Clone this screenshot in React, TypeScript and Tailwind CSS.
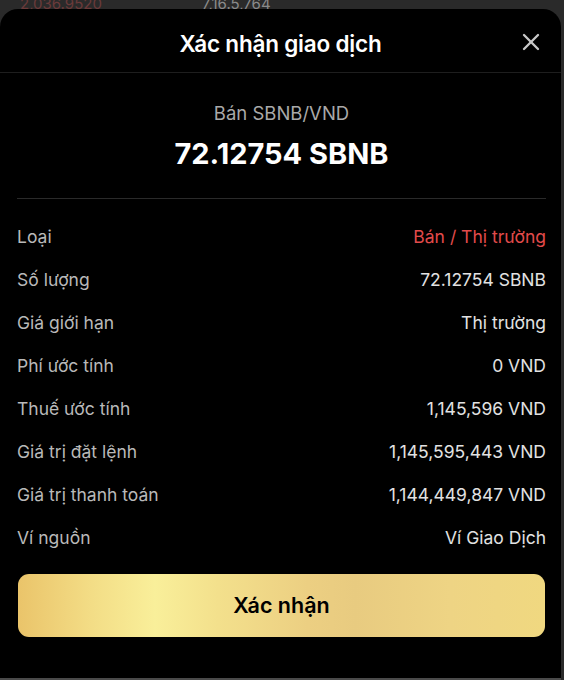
import { X } from "lucide-react"

const rows: { label: string; value: string; red?: boolean }[] = [
    { label: "Loại", value: "Bán / Thị trường", red: true },
    { label: "Số lượng", value: "72.12754 SBNB" },
    { label: "Giá giới hạn", value: "Thị trường" },
    { label: "Phí ước tính", value: "0 VND" },
    { label: "Thuế ước tính", value: "1,145,596 VND" },
    { label: "Giá trị đặt lệnh", value: "1,145,595,443 VND" },
    { label: "Giá trị thanh toán", value: "1,144,449,847 VND" },
    { label: "Ví nguồn", value: "Ví Giao Dịch" },
]

export default function App() {
    return (
        <div className="w-[564px] h-[680px] bg-[#2a2a2a] flex flex-col overflow-hidden font-['Inter','Noto_Sans',sans-serif]">
            {/* page behind the sheet, mostly hidden */}
            <div className="h-[9px] flex items-end overflow-hidden text-[15px] leading-none">
                <span className="ml-[20px] text-[#6b3a3a] -mb-[2px]">2,036.9520</span>
                <span className="ml-[100px] text-[#8a8a8a] -mb-[2px]">7,16.5,764</span>
                <span className="ml-[110px] text-[#777] -mb-[14px]">72.12754</span>
            </div>

            <div className="flex-1 mr-[3px] bg-black rounded-t-[18px] flex flex-col border-b-2 border-[#4a4a4a]">
                <div className="relative h-[64px] pt-[6px] flex items-center justify-center border-b border-[#1e1e1e]">
                    <h1 className="text-white text-[22.5px] font-semibold tracking-[-0.2px]">Xác nhận giao dịch</h1>
                    <X className="absolute right-[16px] top-[19px] text-[#c8c8c8]" size={28} strokeWidth={2} />
                </div>

                <div className="flex flex-col items-center pt-[28px] pb-[26px] ml-[17px] mr-[15px] border-b border-[#2a2a2a]">
                    <div className="text-[#a9a9a9] text-[18.5px] leading-[24px]">Bán SBNB/VND</div>
                    <div className="text-white text-[29px] font-bold leading-[36px] mt-[11px]">72.12754 SBNB</div>
                </div>

                <div className="flex flex-col pl-[17px] pr-[15px] pt-[17px] text-[17.5px]">
                    {rows.map((r) => (
                        <div key={r.label} className="h-[43px] flex items-center justify-between">
                            <span className="text-[#b9b9b9]">{r.label}</span>
                            <span className={r.red ? "text-[#e24b4b]" : "text-[#e2e2e2]"}>{r.value}</span>
                        </div>
                    ))}
                </div>

                <div className="pl-[18px] pr-[16px] pt-[14px]">
                    <button className="w-full h-[63px] rounded-[11px] bg-[linear-gradient(90deg,#eac46a_0%,#f3dd86_14%,#f9ef9a_26%,#f3e08c_38%,#eccf82_55%,#e8cb80_64%,#eed484_82%,#f0d880_100%)] text-black text-[21.5px] font-semibold">
                        Xác nhận
                    </button>
                </div>
            </div>
        </div>
    )
}
